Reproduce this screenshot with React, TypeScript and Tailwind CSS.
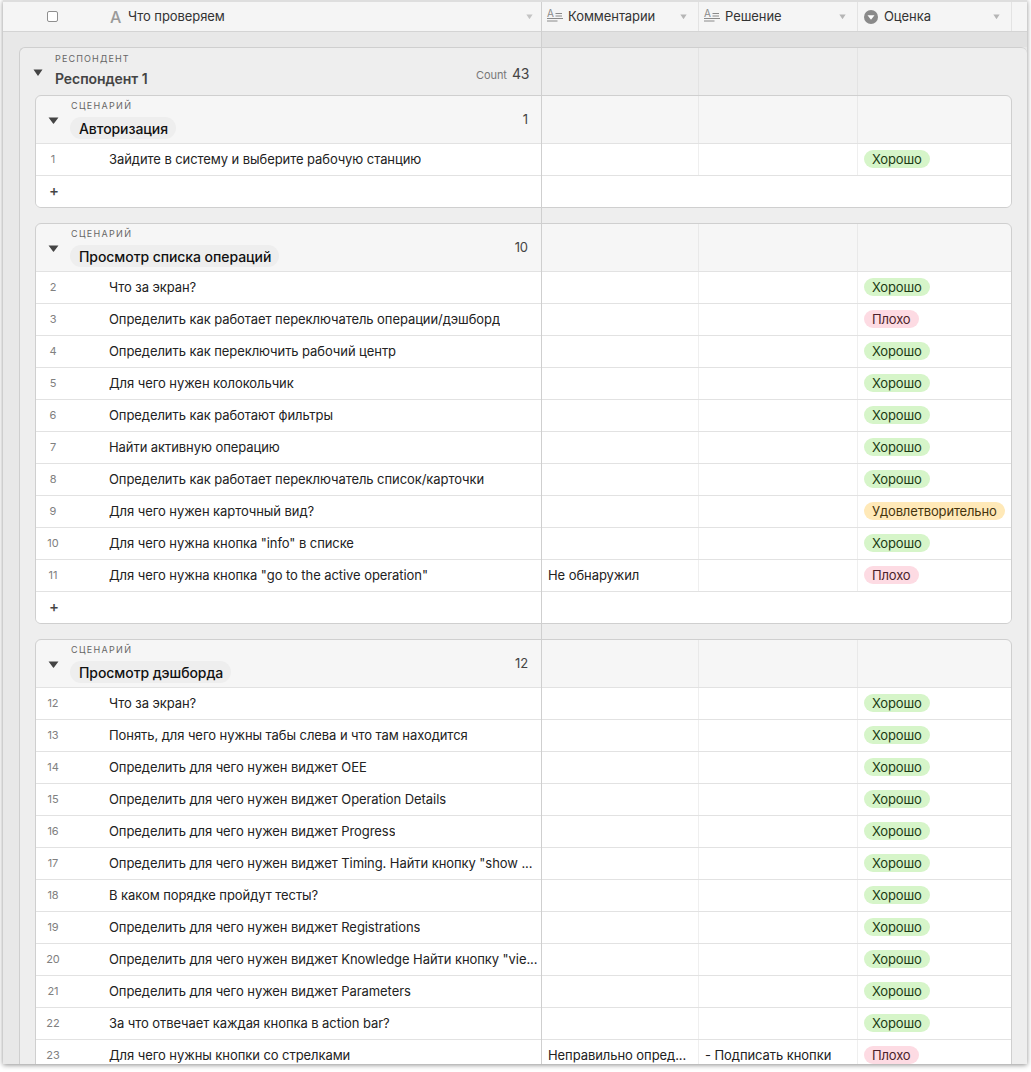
const font = { fontFamily: 'Inter, "Noto Sans", sans-serif', letterSpacing: '-0.07px' };

type Grade = 'good' | 'bad' | 'ok';

interface Row {
  id: number;
  task: string;
  comment?: string;
  decision?: string;
  grade: Grade;
}

const scenario1: Row[] = [
  { id: 1, task: 'Зайдите в систему и выберите рабочую станцию', grade: 'good' },
];

const scenario2: Row[] = [
  { id: 2, task: 'Что за экран?', grade: 'good' },
  { id: 3, task: 'Определить как работает переключатель операции/дэшборд', grade: 'bad' },
  { id: 4, task: 'Определить как переключить рабочий центр', grade: 'good' },
  { id: 5, task: 'Для чего нужен колокольчик', grade: 'good' },
  { id: 6, task: 'Определить как работают фильтры', grade: 'good' },
  { id: 7, task: 'Найти активную операцию', grade: 'good' },
  { id: 8, task: 'Определить как работает переключатель список/карточки', grade: 'good' },
  { id: 9, task: 'Для чего нужен карточный вид?', grade: 'ok' },
  { id: 10, task: 'Для чего нужна кнопка "info" в списке', grade: 'good' },
  { id: 11, task: 'Для чего нужна кнопка "go to the active operation"', comment: 'Не обнаружил', grade: 'bad' },
];

const scenario3: Row[] = [
  { id: 12, task: 'Что за экран?', grade: 'good' },
  { id: 13, task: 'Понять, для чего нужны табы слева и что там находится', grade: 'good' },
  { id: 14, task: 'Определить для чего нужен виджет OEE', grade: 'good' },
  { id: 15, task: 'Определить для чего нужен виджет Operation Details', grade: 'good' },
  { id: 16, task: 'Определить для чего нужен виджет Progress', grade: 'good' },
  { id: 17, task: 'Определить для чего нужен виджет Timing. Найти кнопку "show ...', grade: 'good' },
  { id: 18, task: 'В каком порядке пройдут тесты?', grade: 'good' },
  { id: 19, task: 'Определить для чего нужен виджет Registrations', grade: 'good' },
  { id: 20, task: 'Определить для чего нужен виджет Knowledge Найти кнопку "vie...', grade: 'good' },
  { id: 21, task: 'Определить для чего нужен виджет Parameters', grade: 'good' },
  { id: 22, task: 'За что отвечает каждая кнопка в action bar?', grade: 'good' },
  { id: 23, task: 'Для чего нужны кнопки со стрелками', comment: 'Неправильно опред...', decision: '- Подписать кнопки', grade: 'bad' },
];

function Caret({ className }: { className: string }) {
  return (
    <svg className={className} viewBox="0 0 10 6" preserveAspectRatio="none">
      <path d="M0.5 0.5h9L5.4 5.6a.5.5 0 0 1-.8 0z" fill="currentColor" />
    </svg>
  );
}

function LongTextIcon() {
  return (
    <span className="relative mb-[2px] h-[14px] w-[16px] shrink-0 text-[#8a8a8a]">
      <span className="absolute left-0 top-0 text-[10px] leading-[9px]">A</span>
      <svg className="h-[14px] w-[16px]" viewBox="0 0 16 14">
        <path d="M8.500 4.500h6.500M8.500 7h6.500M0 9.500h16M0 12h10.500" stroke="currentColor" strokeWidth="1" fill="none" />
      </svg>
    </span>
  );
}

function SelectIcon() {
  return (
    <svg className="h-[14px] w-[14px] shrink-0" viewBox="0 0 14 14">
      <circle cx="7" cy="7" r="7" fill="#8a8a8a" />
      <path d="M3.500 5.200h7L7 9.800z" fill="#fff" />
    </svg>
  );
}

function GradePill({ grade }: { grade: Grade }) {
  if (grade === 'good') {
    return <span className="mb-[2px] h-[18px] rounded-full bg-[#d6f5c9] px-2 text-[13px] leading-[18px] tracking-[-0.15px] text-[#1c3a14]">Хорошо</span>;
  }
  if (grade === 'bad') {
    return <span className="mb-[2px] h-[18px] rounded-full bg-[#fddbe3] px-2 text-[13px] leading-[18px] tracking-[-0.15px] text-[#4c1f2b]">Плохо</span>;
  }
  return <span className="mb-[2px] h-[18px] rounded-full bg-[#ffe9b8] px-2 text-[13px] leading-[18px] tracking-[-0.15px] text-[#45340c]">Удовлетворительно</span>;
}

function HeaderCell({ icon, title, className }: { icon: React.ReactNode; title: string; className: string }) {
  return (
    <div className={`flex h-full shrink-0 items-center border-r border-[#e3e3e3] pr-[11px] ${className}`}>
      {icon}
      <span className="flex-1 text-[13px] text-[#333]">{title}</span>
      <Caret className="h-[5px] w-[7px] text-[#b5b5b5]" />
    </div>
  );
}

function TableRow({ row }: { row: Row }) {
  return (
    <div className="flex h-[32px] shrink-0 border-t border-[#e2e2e2] bg-white">
      <div className="flex w-[505px] shrink-0 items-center">
        <span className="w-[73px] shrink-0 pl-[4px] pr-[43px] text-center text-[11px] text-[#808080]">{row.id}</span>
        <span className="truncate text-[13px] text-[#222]">{row.task}</span>
      </div>
      <div className="ml-px flex w-[157px] shrink-0 items-center border-r border-[#efefef] pl-[6px] text-[13px] text-[#222]">
        <span className="truncate">{row.comment}</span>
      </div>
      <div className="flex w-[159px] shrink-0 items-center border-r border-[#efefef] pl-[6px] text-[13px] text-[#222]">
        <span className="truncate">{row.decision}</span>
      </div>
      <div className="flex flex-1 items-center pl-[6px]">
        <GradePill grade={row.grade} />
      </div>
    </div>
  );
}

function ScenarioCard({ title, rows, count, addRow }: { title: string; rows: Row[]; count: number; addRow?: boolean }) {
  return (
    <div className="w-[977px] shrink-0 overflow-hidden rounded-[6px] border border-[#cfcfcf] bg-[#f6f6f6]">
      <div className="flex h-[47px]">
        <div className="relative w-[505px] shrink-0">
          <Caret className="absolute left-[12px] top-[21px] h-[7px] w-[11px] text-[#444]" />
          <div className="pl-[35px] pt-[4px] text-[9px] leading-[11px] tracking-[1.33px] text-[#666]">СЦЕНАРИЙ</div>
          <div className="ml-[34px] mt-[6px] inline-block h-[22px] rounded-full bg-[#eeeeee] pl-[9px] pr-[8px] text-[14px] font-medium leading-[23px] text-[#111]">{title}</div>
          <div className="absolute right-[13px] top-[14px] text-[13px] text-[#444]">{count}</div>
        </div>
        <div className="ml-px w-[157px] shrink-0 border-r border-[#e9e9e9]" />
        <div className="w-[159px] shrink-0 border-r border-[#e9e9e9]" />
      </div>
      {rows.map((row) => (
        <TableRow key={row.id} row={row} />
      ))}
      {addRow && (
        <div className="flex h-[32px] items-center border-t border-[#e2e2e2] bg-white pl-[13px] text-[15px] font-medium text-[#444]">+</div>
      )}
    </div>
  );
}

export default function App() {
  return (
    <div className="h-[1072px] w-[1031px] overflow-hidden bg-white" style={font}>
      <div className="relative ml-[3px] flex h-[1064px] w-[1024px] flex-col overflow-hidden border-t-2 border-[#dedede] bg-[#e8e8e8] shadow-[0_1px_5px_rgba(0,0,0,0.45)]">
        <div className="flex h-[30px] shrink-0 items-center border-b border-[#d4d4d4] bg-[#f5f5f5]">
          <div className="flex h-full w-[539px] shrink-0 items-center border-r border-[#cfcfcf]">
            <span className="ml-[44px] h-[11px] w-[11px] rounded-[2px] border border-[#8f8f8f] bg-white" />
            <span className="ml-[52px] w-[13px] text-[16px] font-medium text-[#9a9a9a]">A</span>
            <span className="ml-[5px] flex-1 text-[13px] text-[#333]">Что проверяем</span>
            <Caret className="mr-[8px] h-[5px] w-[7px] text-[#c4c4c4]" />
          </div>
          <HeaderCell icon={<LongTextIcon />} title="Комментарии" className="w-[157px] gap-[5px] pl-[5px]" />
          <HeaderCell icon={<LongTextIcon />} title="Решение" className="w-[159px] gap-[5px] pl-[5px]" />
          <HeaderCell icon={<SelectIcon />} title="Оценка" className="w-[154px] gap-[6px] pl-[6px]" />
        </div>

        <div className="flex h-[15px] shrink-0">
          <div className="w-[539px] shrink-0" />
          <div className="flex-1 bg-[#e1e1e1]" />
        </div>

        <div className="ml-[16px] flex-1 rounded-t-[6px] border-l border-t border-[#cfcfcf] bg-[#eeeeee]">
          <div className="relative flex h-[47px]">
            <div className="w-[522px] shrink-0">
              <Caret className="absolute left-[13px] top-[21px] h-[7px] w-[10px] text-[#444]" />
              <div className="pl-[35px] pt-[5px] text-[9px] leading-[11px] tracking-[1.15px] text-[#666]">РЕСПОНДЕНТ</div>
              <div className="pl-[35px] pt-[4px] text-[14px] font-semibold text-[#444]">Респондент 1</div>
              <div className="absolute left-[456px] top-[15px] flex items-baseline gap-[5px]">
                <span className="text-[11px] text-[#777]">Count</span>
                <span className="text-[14px] text-[#444]">43</span>
              </div>
            </div>
            <div className="w-[157px] shrink-0 border-r border-[#e3e3e3]" />
            <div className="w-[159px] shrink-0 border-r border-[#e3e3e3]" />
          </div>
          <div className="flex flex-col gap-[15px] pl-[15px]">
            <ScenarioCard title="Авторизация" rows={scenario1} count={1} addRow />
            <ScenarioCard title="Просмотр списка операций" rows={scenario2} count={10} addRow />
            <ScenarioCard title="Просмотр дэшборда" rows={scenario3} count={12} />
          </div>
        </div>

        {/* frozen column line runs through the cards and the gaps */}
        <div className="absolute bottom-0 left-[538px] top-0 w-px bg-[#cfcfcf]" />
      </div>
    </div>
  );
}
